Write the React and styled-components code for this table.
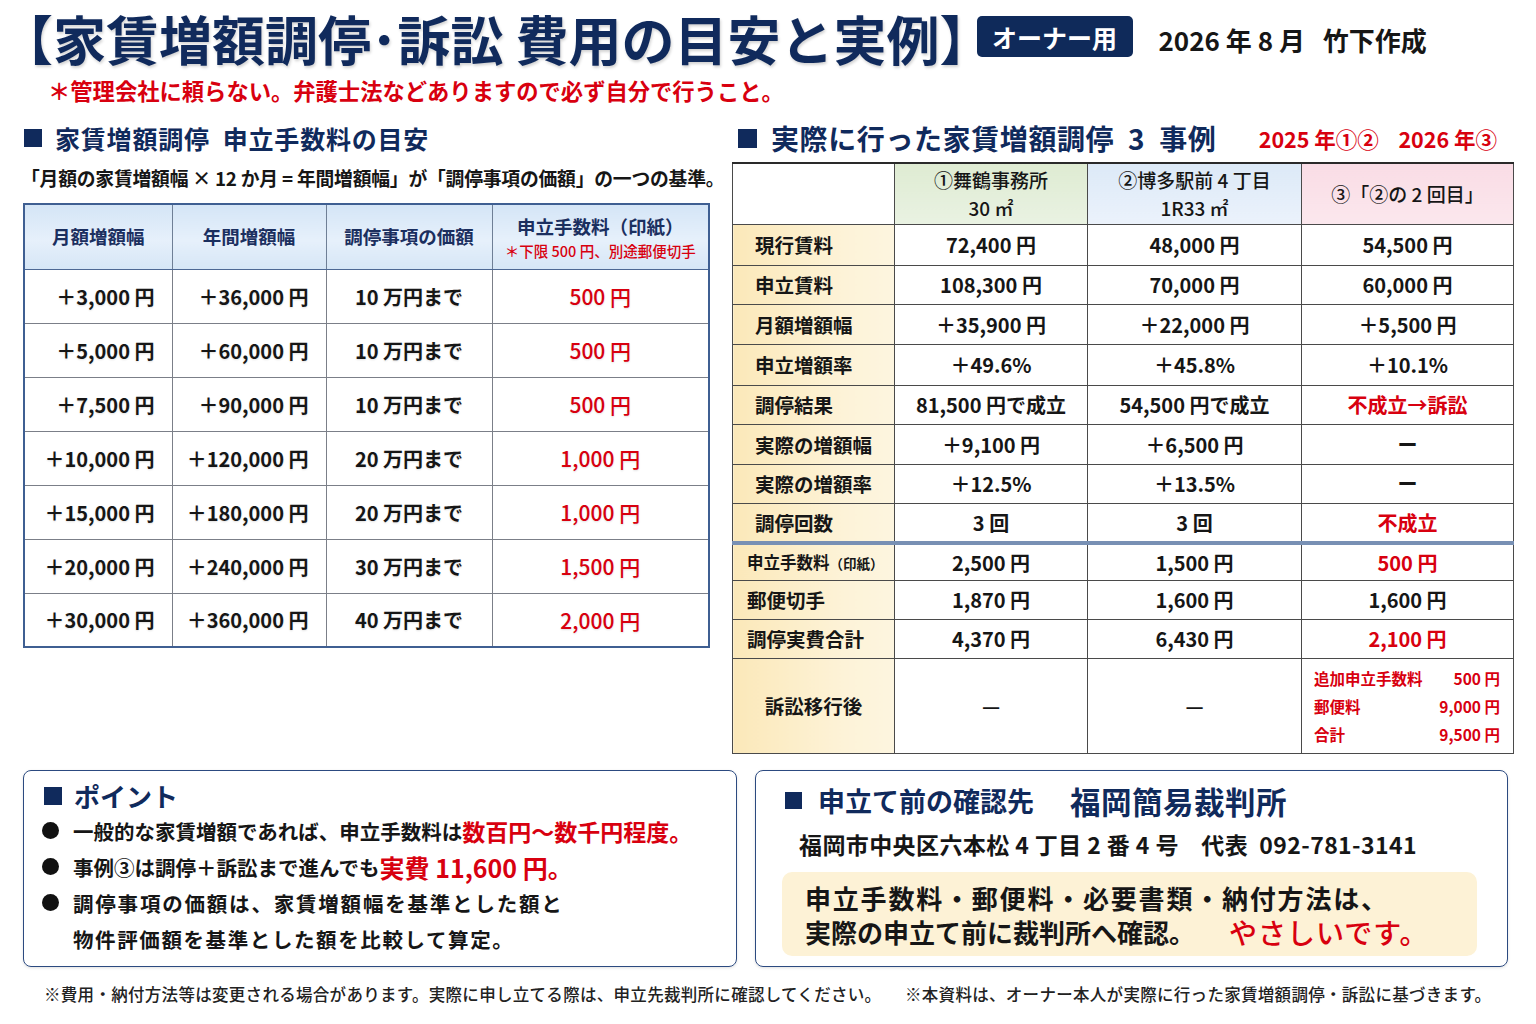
import React from 'react';
import styled, { createGlobalStyle } from 'styled-components';

const FONT = `"Noto Sans CJK JP", "Noto Sans", sans-serif`;
const NAVY = '#102a5c';
const RED = '#d8000f';
const INK = '#161616';

const GlobalStyle = createGlobalStyle`
  html, body { margin: 0; padding: 0; background: #fff; }
  body { font-family: ${FONT}; color: ${INK}; }
  * { box-sizing: border-box; }
`;

const Page = styled.div`
  width: 1536px;
  height: 1024px;
  overflow: hidden;
  background: #fff;
  padding: 0 23px;
  display: flex;
  flex-direction: column;
`;

/* ---------- header ---------- */
const Header = styled.header`
  height: 76px;
  display: flex;
  align-items: center;
`;

const Title = styled.h1`
  margin: 0 0 0 -23px;
  font-size: 53px;
  line-height: 1;
  font-weight: 700;
  color: ${NAVY};
  white-space: nowrap;
  text-shadow: 1px 2px 3px rgba(0, 0, 0, 0.18);
`;

const Badge = styled.div`
  margin-left: ${p => p.$offset}px;
  width: 156px;
  height: 41px;
  border-radius: 5px;
  background: #0f2a5a;
  color: #fff;
  font-size: 25px;
  font-weight: 700;
  display: flex;
  align-items: center;
  justify-content: center;
  margin-top: -3px;
  flex: none;
`;

const DateText = styled.div`
  margin-left: 26px;
  font-size: 26px;
  font-weight: 700;
  color: ${INK};
  white-space: nowrap;
  margin-top: 2px;
`;

const Subtitle = styled.p`
  margin: 0;
  padding-left: 25px;
  height: 28px;
  line-height: 28px;
  font-size: 22.3px;
  font-weight: 700;
  color: ${RED};
  white-space: nowrap;
`;

/* ---------- main ---------- */
const Main = styled.main`
  margin-top: 16px;
  display: grid;
  grid-template-columns: 685px 781px;
  column-gap: 24px;
  align-items: start;
`;

const Column = styled.section`
  display: flex;
  flex-direction: column;
`;

const SectionHeading = styled.h2`
  margin: 0;
  height: 36px;
  display: flex;
  align-items: center;
  padding-left: ${p => p.$indent || 0}px;
  padding-right: 16px;
  font-size: ${p => p.$size || 25}px;
  letter-spacing: ${p => p.$spacing || 0}px;
  font-weight: 700;
  color: ${NAVY};
  white-space: nowrap;
`;

const Square = styled.span`
  flex: none;
  width: ${p => p.$size || 18}px;
  height: ${p => p.$size || 18}px;
  background: ${NAVY};
  margin-right: ${p => p.$gap || 13}px;
`;

const RedNote = styled.span`
  margin-left: auto;
  font-size: 21.5px;
  letter-spacing: 0;
  font-weight: 700;
  color: ${RED};
`;

const Formula = styled.p`
  margin: 9px 0 0 -2px;
  height: 26px;
  line-height: 26px;
  font-size: 18.8px;
  font-weight: 700;
  color: ${INK};
  white-space: nowrap;
  letter-spacing: -0.2px;
`;

/* ---------- left table ---------- */
const FeeTable = styled.table`
  margin-top: 12px;
  width: 685px;
  border-collapse: collapse;
  table-layout: fixed;
  border: 2px solid #3f5f92;
`;

const FeeHead = styled.th`
  height: 65px;
  padding: 0;
  border: 1px solid #6f7f96;
  border-bottom: 1.5px solid #4d6894;
  background: linear-gradient(180deg, #d4e5f6 0%, #e6f0fb 55%, #d6e6f6 100%);
  color: #1b2f5f;
  font-size: 18.5px;
  font-weight: 700;
  text-align: center;
  vertical-align: middle;
  line-height: 1.45;
`;

const HeadSub = styled.span`
  display: block;
  color: ${RED};
  font-size: 14.5px;
  font-weight: 500;
`;

const FeeCell = styled.td`
  height: 54px;
  padding: 0 ${p => (p.$align === 'right' ? 17 : 0)}px 0 0;
  border: 1px solid #7b7f88;
  text-align: ${p => p.$align || 'center'};
  vertical-align: middle;
  font-size: ${p => (p.$red ? 21 : 20)}px;
  font-weight: ${p => (p.$red ? 500 : 700)};
  color: ${p => (p.$red ? RED : INK)};
  white-space: nowrap;
  text-shadow: 0 1px 2px rgba(0, 0, 0, 0.12);
`;

/* ---------- right table ---------- */
const CaseTable = styled.table`
  margin-top: 6px;
  width: 781px;
  border-collapse: collapse;
  table-layout: fixed;
  border: 1.5px solid #666;
  border-top: 2.5px solid #2a2a2a;
`;

const CaseHead = styled.th`
  height: 61px;
  padding: 0;
  border: 1px solid #4a4a4a;
  background: ${p => p.$bg || '#fff'};
  font-size: 19px;
  font-weight: 500;
  color: ${INK};
  text-align: center;
  vertical-align: middle;
  line-height: 28px;
`;

const LabelCell = styled.td`
  height: ${p => p.$h}px;
  padding: 0 0 0 ${p => (p.$center ? 0 : p.$pad)}px;
  border: 1px solid #4a4a4a;
  border-top: ${p => (p.$sep ? '4px solid #7890b4' : '1px solid #4a4a4a')};
  background: linear-gradient(90deg, #fbe8b9 0%, #fdf3d8 70%, #fdf5df 100%);
  font-size: ${p => p.$size || 19.5}px;
  font-weight: 700;
  color: ${INK};
  text-align: ${p => (p.$center ? 'center' : 'left')};
  vertical-align: middle;
  white-space: nowrap;
`;

const LabelSmall = styled.span`
  font-size: 13.5px;
`;

const ValueCell = styled.td`
  height: ${p => p.$h}px;
  padding: 0;
  border: 1px solid #4a4a4a;
  border-top: ${p => (p.$sep ? '4px solid #7890b4' : '1px solid #4a4a4a')};
  background: #fff;
  font-size: 20px;
  font-weight: 700;
  color: ${p => (p.$red ? RED : INK)};
  text-align: center;
  vertical-align: middle;
  white-space: nowrap;
`;

const Breakdown = styled.div`
  padding: 0 13px 0 12px;
  display: flex;
  flex-direction: column;
`;

const BreakLine = styled.div`
  height: 28px;
  display: flex;
  align-items: center;
  justify-content: space-between;
  font-size: 15.5px;
  font-weight: 700;
  color: ${RED};
`;

/* ---------- bottom ---------- */
const Bottom = styled.div`
  margin-top: 16px;
  display: grid;
  grid-template-columns: 714px 753px;
  column-gap: 18px;
  height: 197px;
`;

const Box = styled.div`
  border: 1.5px solid #2c4a80;
  border-radius: 8px;
  padding: ${p => p.$pad};
  display: flex;
  flex-direction: column;
  box-shadow: 0 1px 3px rgba(0, 0, 0, 0.12);
`;

const BoxHeading = styled.h3`
  margin: 0;
  height: ${p => p.$h}px;
  display: flex;
  align-items: center;
  padding-left: ${p => p.$indent || 0}px;
  font-size: ${p => p.$size}px;
  font-weight: 700;
  color: ${NAVY};
  white-space: nowrap;
`;

const Court = styled.span`
  margin-left: 36px;
  font-size: 30.5px;
  letter-spacing: 0.5px;
`;

const PointLine = styled.div`
  height: 36px;
  display: flex;
  align-items: center;
  font-size: 20.5px;
  font-weight: 700;
  color: ${INK};
  white-space: nowrap;
  letter-spacing: ${p => p.$spacing || 0}px;
  padding-left: ${p => (p.$cont ? 31 : 0)}px;
`;

const Dot = styled.span`
  flex: none;
  width: 17px;
  height: 17px;
  border-radius: 50%;
  background: #111;
  margin-right: 14px;
`;

const Emph = styled.span`
  color: ${RED};
  font-size: ${p => p.$size}px;
  letter-spacing: 0;
`;

const Address = styled.p`
  margin: 9px 0 0 0;
  padding-left: 17px;
  height: 30px;
  line-height: 30px;
  font-size: 23px;
  letter-spacing: 0.4px;
  font-weight: 700;
  color: ${INK};
  white-space: nowrap;
`;

const Callout = styled.div`
  margin-top: 13px;
  width: 695px;
  height: 84px;
  border-radius: 10px;
  background: #fdf2d6;
  padding: 9px 23px 0;
`;

const CalloutLine = styled.div`
  height: 34px;
  display: flex;
  align-items: center;
  font-size: 26px;
  font-weight: 700;
  color: ${INK};
  white-space: nowrap;
  letter-spacing: ${p => p.$spacing || 0}px;
`;

const Gentle = styled.span`
  margin-left: 34px;
  color: ${RED};
  font-size: 28px;
  font-weight: 500;
  letter-spacing: 1px;
`;

const Footer = styled.footer`
  margin-top: 15px;
  height: 24px;
  display: flex;
  align-items: center;
  padding-left: 21px;
`;

const FootNote = styled.span`
  flex: ${p => (p.$w ? `0 0 ${p.$w}px` : '1 1 auto')};
  font-size: 16.5px;
  font-weight: 500;
  color: #222;
  white-space: nowrap;
  letter-spacing: 0.3px;
`;

/* ---------- data ---------- */
const feeRows = [
  ['＋3,000 円', '＋36,000 円', '10 万円まで', '500 円'],
  ['＋5,000 円', '＋60,000 円', '10 万円まで', '500 円'],
  ['＋7,500 円', '＋90,000 円', '10 万円まで', '500 円'],
  ['＋10,000 円', '＋120,000 円', '20 万円まで', '1,000 円'],
  ['＋15,000 円', '＋180,000 円', '20 万円まで', '1,000 円'],
  ['＋20,000 円', '＋240,000 円', '30 万円まで', '1,500 円'],
  ['＋30,000 円', '＋360,000 円', '40 万円まで', '2,000 円'],
];

const caseRows = [
  { label: '現行賃料', h: 41, v: ['72,400 円', '48,000 円', '54,500 円'] },
  { label: '申立賃料', h: 39, v: ['108,300 円', '70,000 円', '60,000 円'] },
  { label: '月額増額幅', h: 40, v: ['＋35,900 円', '＋22,000 円', '＋5,500 円'] },
  { label: '申立増額率', h: 41, v: ['＋49.6%', '＋45.8%', '＋10.1%'] },
  { label: '調停結果', h: 39, v: ['81,500 円で成立', '54,500 円で成立', '不成立→訴訟'], red: 2 },
  { label: '実際の増額幅', h: 40, v: ['＋9,100 円', '＋6,500 円', 'ー'] },
  { label: '実際の増額率', h: 39, v: ['＋12.5%', '＋13.5%', 'ー'] },
  { label: '調停回数', h: 40, v: ['3 回', '3 回', '不成立'], red: 2 },
];

const costRows = [
  { label: '申立手数料', small: '（印紙）', h: 37, v: ['2,500 円', '1,500 円', '500 円'], red: 2, sep: true },
  { label: '郵便切手', h: 39, v: ['1,870 円', '1,600 円', '1,600 円'] },
  { label: '調停実費合計', h: 39, v: ['4,370 円', '6,430 円', '2,100 円'], red: 2 },
];

export default function App() {
  return (
    <>
      <GlobalStyle />
      <Page>
        <Header>
          <Title>【家賃増額調停･訴訟 費用の目安と実例】</Title>
          <Badge $offset={-16}>オーナー用</Badge>
          <DateText>2026 年 8 月&nbsp;&nbsp;&nbsp;竹下作成</DateText>
        </Header>
        <Subtitle>＊管理会社に頼らない。弁護士法などありますので必ず自分で行うこと。</Subtitle>

        <Main>
          <Column>
            <SectionHeading $indent={1} $size={25} $spacing={0.8}>
              <Square $size={18} $gap={13} />
              家賃増額調停&nbsp;&nbsp;申立手数料の目安
            </SectionHeading>
            <Formula>「月額の家賃増額幅 × 12 か月 = 年間増額幅」が「調停事項の価額」の一つの基準。</Formula>
            <FeeTable>
              <colgroup>
                <col style={{ width: 148 }} />
                <col style={{ width: 154 }} />
                <col style={{ width: 166 }} />
                <col style={{ width: 217 }} />
              </colgroup>
              <thead>
                <tr>
                  <FeeHead>月額増額幅</FeeHead>
                  <FeeHead>年間増額幅</FeeHead>
                  <FeeHead>調停事項の価額</FeeHead>
                  <FeeHead>
                    申立手数料（印紙）
                    <HeadSub>＊下限 500 円、別途郵便切手</HeadSub>
                  </FeeHead>
                </tr>
              </thead>
              <tbody>
                {feeRows.map((r, i) => (
                  <tr key={i}>
                    <FeeCell $align="right">{r[0]}</FeeCell>
                    <FeeCell $align="right">{r[1]}</FeeCell>
                    <FeeCell>{r[2]}</FeeCell>
                    <FeeCell $red>{r[3]}</FeeCell>
                  </tr>
                ))}
              </tbody>
            </FeeTable>
          </Column>

          <Column>
            <SectionHeading $indent={6} $size={28} $spacing={0.6}>
              <Square $size={19} $gap={14} />
              実際に行った家賃増額調停&nbsp;&nbsp;3&nbsp;&nbsp;事例
              <RedNote>2025 年①②&nbsp;&nbsp;&nbsp;&nbsp;2026 年③</RedNote>
            </SectionHeading>
            <CaseTable>
              <colgroup>
                <col style={{ width: 162 }} />
                <col style={{ width: 193 }} />
                <col style={{ width: 214 }} />
                <col style={{ width: 212 }} />
              </colgroup>
              <thead>
                <tr>
                  <CaseHead />
                  <CaseHead $bg="linear-gradient(180deg, #deebd2, #e9f2e2)">
                    ①舞鶴事務所<br />30 ㎡
                  </CaseHead>
                  <CaseHead $bg="linear-gradient(180deg, #dce9f7, #ebf2fb)">
                    ②博多駅前 4 丁目<br />1R33 ㎡
                  </CaseHead>
                  <CaseHead $bg="linear-gradient(180deg, #f9dce5, #fbe7ed)">③「②の 2 回目」</CaseHead>
                </tr>
              </thead>
              <tbody>
                {caseRows.map(r => (
                  <tr key={r.label}>
                    <LabelCell $h={r.h} $pad={22}>{r.label}</LabelCell>
                    {r.v.map((v, j) => (
                      <ValueCell key={j} $h={r.h} $red={r.red === j}>{v}</ValueCell>
                    ))}
                  </tr>
                ))}
                {costRows.map(r => (
                  <tr key={r.label}>
                    <LabelCell $h={r.h} $pad={14} $sep={r.sep} $size={r.small ? 16.5 : 19.5}>
                      {r.label}
                      {r.small && <LabelSmall>{r.small}</LabelSmall>}
                    </LabelCell>
                    {r.v.map((v, j) => (
                      <ValueCell key={j} $h={r.h} $sep={r.sep} $red={r.red === j}>{v}</ValueCell>
                    ))}
                  </tr>
                ))}
                <tr>
                  <LabelCell $h={95} $center>訴訟移行後</LabelCell>
                  <ValueCell $h={95}>—</ValueCell>
                  <ValueCell $h={95}>—</ValueCell>
                  <ValueCell $h={95}>
                    <Breakdown>
                      <BreakLine><span>追加申立手数料</span><span>500 円</span></BreakLine>
                      <BreakLine><span>郵便料</span><span>9,000 円</span></BreakLine>
                      <BreakLine><span>合計</span><span>9,500 円</span></BreakLine>
                    </Breakdown>
                  </ValueCell>
                </tr>
              </tbody>
            </CaseTable>
          </Column>
        </Main>

        <Bottom>
          <Box $pad="8px 18px 0 18px">
            <BoxHeading $h={34} $size={26} $indent={2}>
              <Square $size={18} $gap={12} />
              ポイント
            </BoxHeading>
            <PointLine>
              <Dot />
              一般的な家賃増額であれば、申立手数料は<Emph $size={23}>数百円〜数千円程度。</Emph>
            </PointLine>
            <PointLine>
              <Dot />
              事例③は調停＋訴訟まで進んでも<Emph $size={25}>実費 11,600 円。</Emph>
            </PointLine>
            <PointLine $spacing={1.8}>
              <Dot />
              調停事項の価額は、家賃増額幅を基準とした額と
            </PointLine>
            <PointLine $cont $spacing={1.6}>物件評価額を基準とした額を比較して算定。</PointLine>
          </Box>

          <Box $pad="11px 30px 0 26px">
            <BoxHeading $h={38} $size={27} $indent={3}>
              <Square $size={17} $gap={16} />
              申立て前の確認先
              <Court>福岡簡易裁判所</Court>
            </BoxHeading>
            <Address>福岡市中央区六本松 4 丁目 2 番 4 号&nbsp;&nbsp;&nbsp;&nbsp;代表&nbsp;&nbsp;092-781-3141</Address>
            <Callout>
              <CalloutLine $spacing={1.8}>申立手数料・郵便料・必要書類・納付方法は、</CalloutLine>
              <CalloutLine>
                実際の申立て前に裁判所へ確認。
                <Gentle>やさしいです。</Gentle>
              </CalloutLine>
            </Callout>
          </Box>
        </Bottom>

        <Footer>
          <FootNote $w={861}>
            ※費用・納付方法等は変更される場合があります。実際に申し立てる際は、申立先裁判所に確認してください。
          </FootNote>
          <FootNote>※本資料は、オーナー本人が実際に行った家賃増額調停・訴訟に基づきます。</FootNote>
        </Footer>
      </Page>
    </>
  );
}
